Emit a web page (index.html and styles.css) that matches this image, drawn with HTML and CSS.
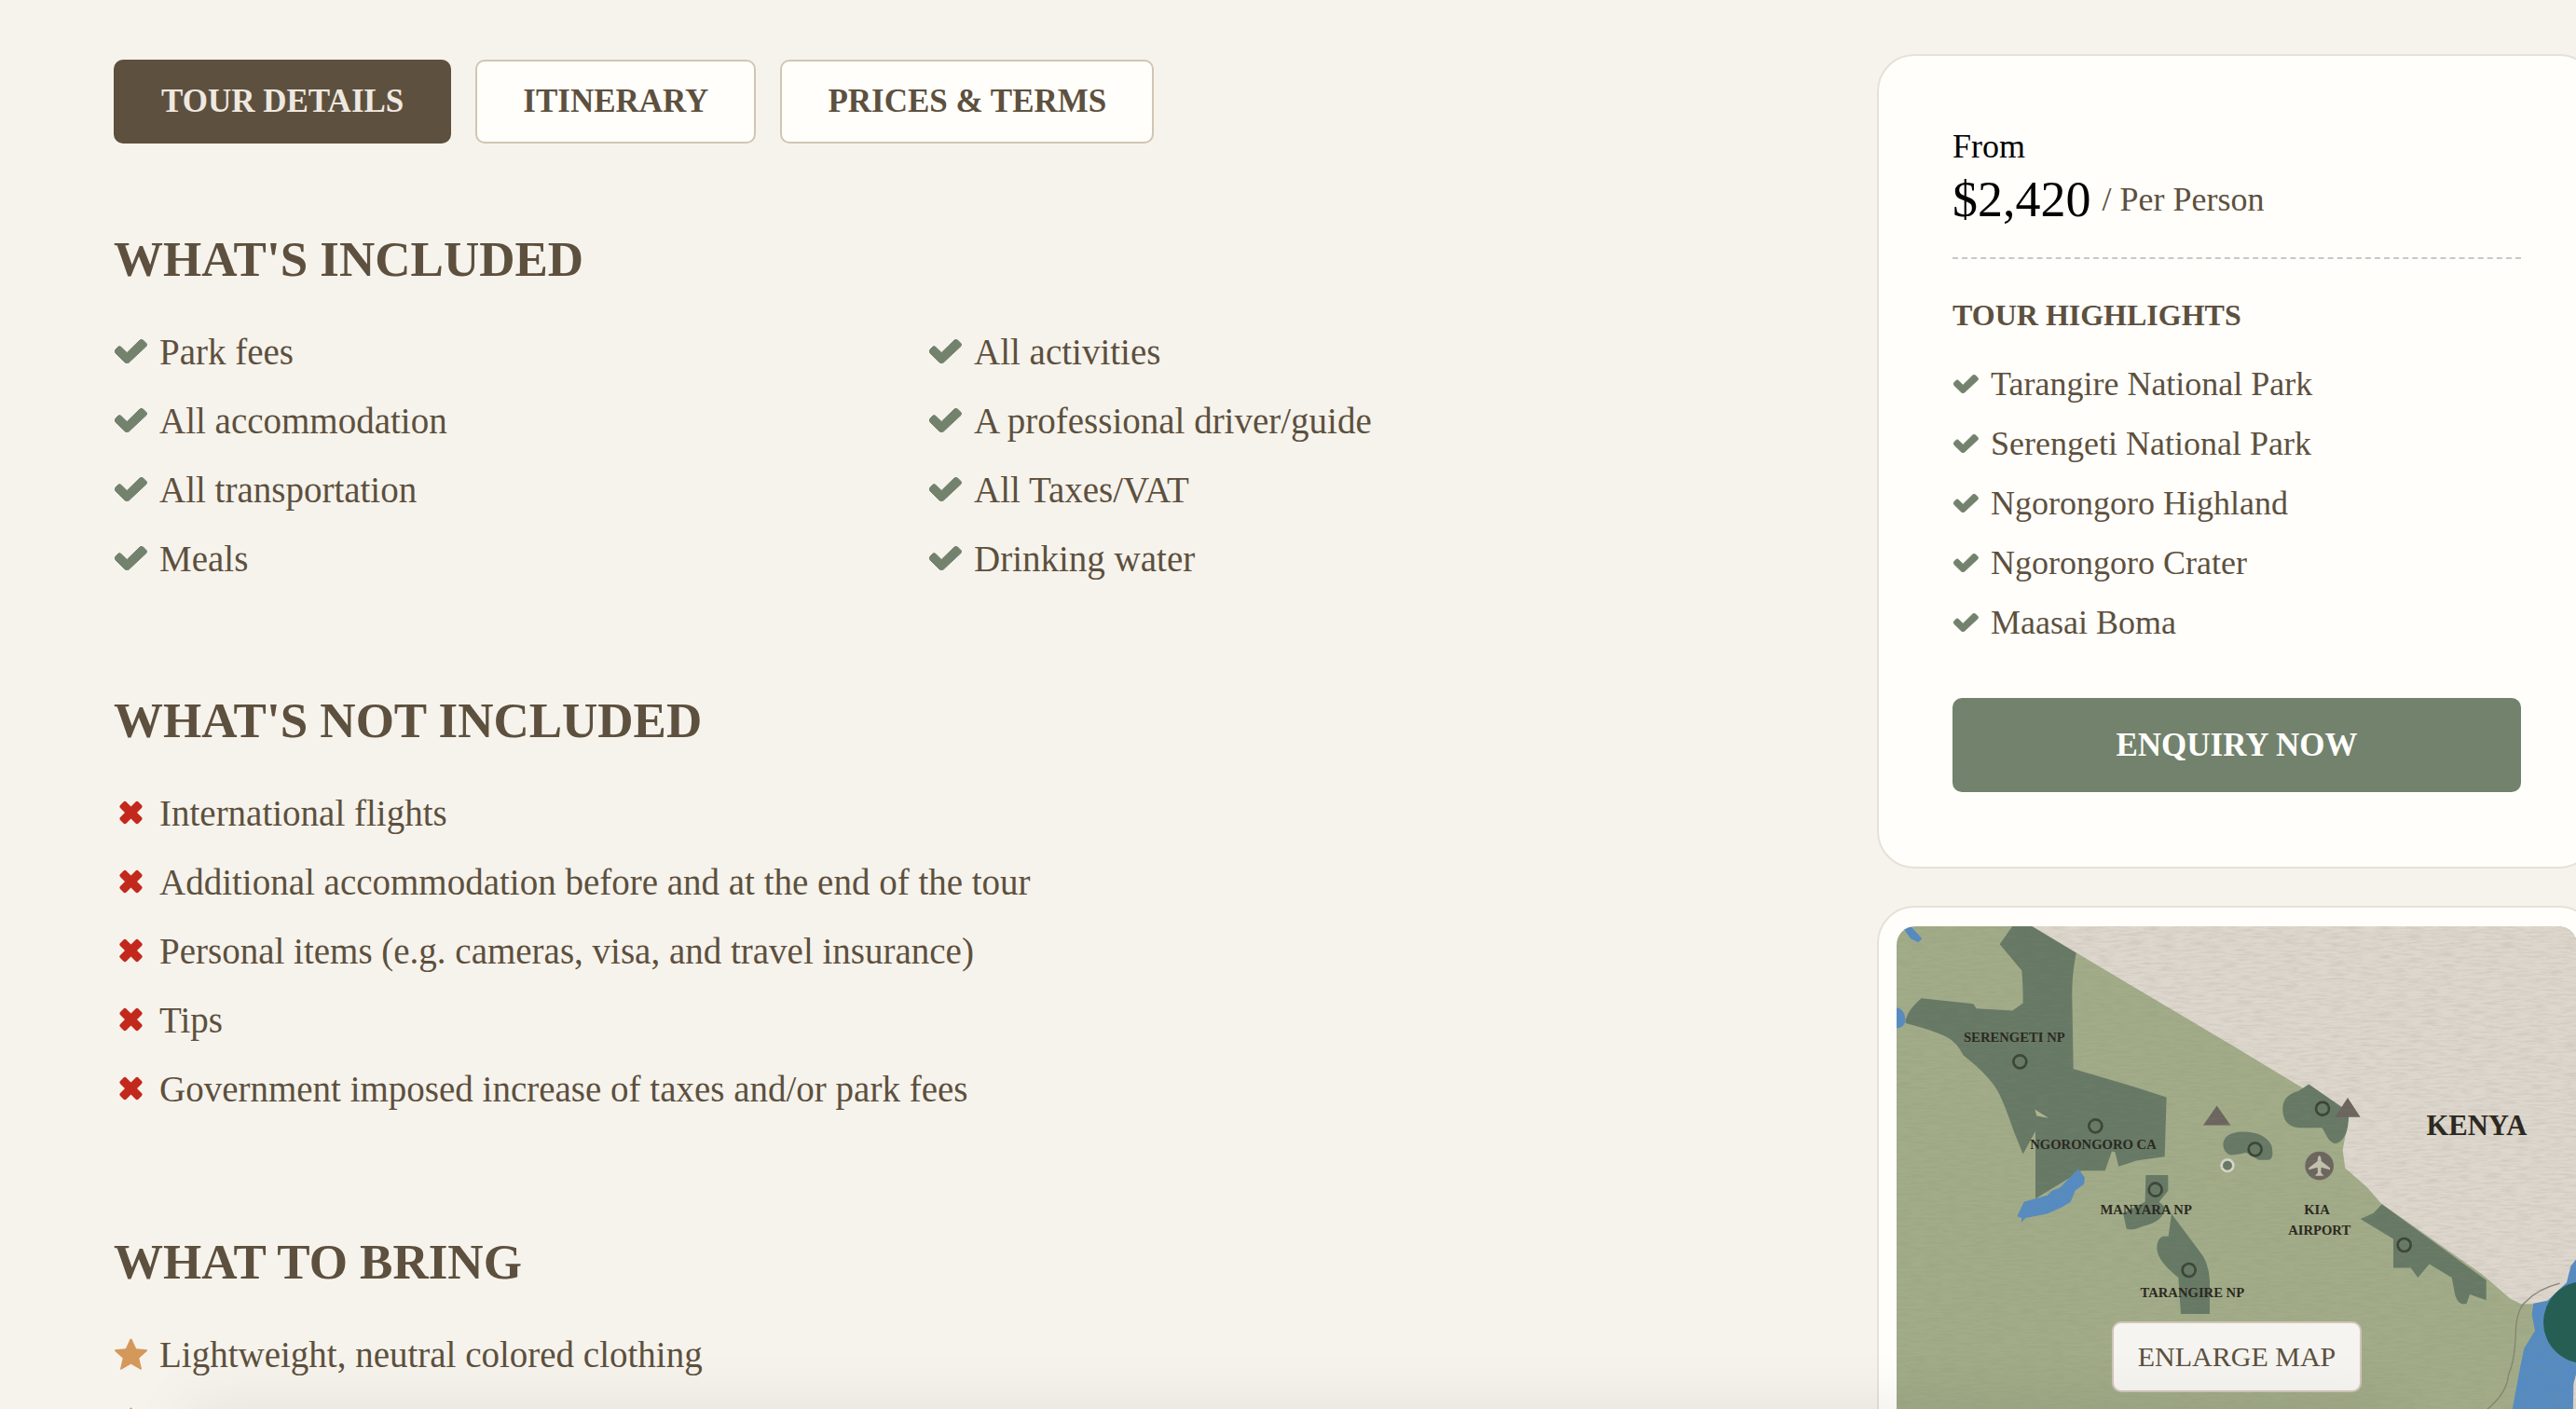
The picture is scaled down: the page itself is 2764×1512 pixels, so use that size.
FILE: index.html
```html
<!DOCTYPE html>
<html lang="en">
<head>
<meta charset="utf-8">
<meta name="viewport" content="width=device-width, initial-scale=1">
<title>Tour Details</title>
<link rel="stylesheet" href="styles.css">
</head>
<body>
<svg class="sprite" aria-hidden="true">
  <symbol id="check" viewBox="0 0 35 26"><path d="M1 11 4 8Q5.500 7 7 8.500L13.200 14.500 27 1Q28.800-.3 30.500 1L34 4.500Q35 6 34 7.500L15.300 25Q13.200 26.600 11.200 25L1 15Q-.4 13 1 11Z" fill="currentColor" stroke="currentColor" stroke-width="1" stroke-linejoin="round"/></symbol>
  <symbol id="cross" viewBox="0 0 26 26"><path d="M5 1.500Q6.500 0 8 1.500L13 6.500 18 1.500Q19.500 0 21 1.500L24.500 5Q26 6.500 24.500 8L19.500 13 24.500 18Q26 19.500 24.500 21L21 24.500Q19.500 26 18 24.500L13 19.500 8 24.500Q6.500 26 5 24.500L1.500 21Q0 19.500 1.500 18L6.500 13 1.500 8Q0 6.500 1.500 5Z" fill="currentColor"/></symbol>
  <symbol id="star" viewBox="0 0 34 32"><path d="M17 .5Q17.700.5 18 1.200L22.300 10.500 33 11.500Q34 12 33.300 13L25.300 20.300 27.800 31Q27.700 32 26.800 31.700L17 26.200 7.200 31.700Q6.300 32 6.200 31L8.700 20.300.7 13Q0 12 1 11.500L11.700 10.500 16 1.200Q16.300.5 17 .5Z" fill="currentColor"/></symbol>
</svg>
<div class="page">
  <main class="content">
    <nav class="tabs" aria-label="Tour sections">
      <button type="button" class="tab tab-active">TOUR DETAILS</button>
      <button type="button" class="tab">ITINERARY</button>
      <button type="button" class="tab">PRICES &amp; TERMS</button>
    </nav>

    <section class="block">
      <h2 class="title">WHAT'S INCLUDED</h2>
      <ul class="list list-split check">
        <li><svg class="icon"><use href="#check"/></svg>Park fees</li>
        <li><svg class="icon"><use href="#check"/></svg>All activities</li>
        <li><svg class="icon"><use href="#check"/></svg>All accommodation</li>
        <li><svg class="icon"><use href="#check"/></svg>A professional driver/guide</li>
        <li><svg class="icon"><use href="#check"/></svg>All transportation</li>
        <li><svg class="icon"><use href="#check"/></svg>All Taxes/VAT</li>
        <li><svg class="icon"><use href="#check"/></svg>Meals</li>
        <li><svg class="icon"><use href="#check"/></svg>Drinking water</li>
      </ul>
    </section>

    <section class="block block-wide">
      <h2 class="title">WHAT'S NOT INCLUDED</h2>
      <ul class="list cross">
        <li><svg class="icon"><use href="#cross"/></svg>International flights</li>
        <li><svg class="icon"><use href="#cross"/></svg>Additional accommodation before and at the end of the tour</li>
        <li><svg class="icon"><use href="#cross"/></svg>Personal items (e.g. cameras, visa, and travel insurance)</li>
        <li><svg class="icon"><use href="#cross"/></svg>Tips</li>
        <li><svg class="icon"><use href="#cross"/></svg>Government imposed increase of taxes and/or park fees</li>
      </ul>
    </section>

    <section class="block">
      <h2 class="title">WHAT TO BRING</h2>
      <ul class="list star">
        <li><svg class="icon"><use href="#star"/></svg>Lightweight, neutral colored clothing</li>
        <li><svg class="icon"><use href="#star"/></svg></li>
      </ul>
    </section>
  </main>

  <aside class="sidebar">
    <div class="card">
      <p class="from">From</p>
      <p class="price"><span class="amount">$2,420</span><span class="unit">/ Per Person</span></p>
      <h3 class="subtitle">TOUR HIGHLIGHTS</h3>
      <ul class="highlights check">
        <li><svg class="icon-small"><use href="#check"/></svg>Tarangire National Park</li>
        <li><svg class="icon-small"><use href="#check"/></svg>Serengeti National Park</li>
        <li><svg class="icon-small"><use href="#check"/></svg>Ngorongoro Highland</li>
        <li><svg class="icon-small"><use href="#check"/></svg>Ngorongoro Crater</li>
        <li><svg class="icon-small"><use href="#check"/></svg>Maasai Boma</li>
      </ul>
      <button type="button" class="enquire">ENQUIRY NOW</button>
    </div>

    <div class="map-card">
      <svg class="map" viewBox="105 69 2190 1650" role="img" aria-label="Map of the tour">
        <defs>
          <filter id="cloth" x="0" y="0" width="100%" height="100%">
            <feTurbulence type="fractalNoise" baseFrequency="0.02 0.14" numOctaves="3" seed="4"/>
            <feColorMatrix values="0 0 0 0 0.250  0 0 0 0 0.250  0 0 0 0 0.200  1.200 0 0 0 -0.450"/>
          </filter>
        </defs>
        <path fill="#a2ac88" d="M105 69H2295V1719H105Z"/>
        <g transform="translate(0 -3) scale(1 1.037)">
          <path fill="#ded7cd" d="M540 69 1200 448 1530 640 1560 660 1541 765 1549 820 1620 880 1665 930 1990 1150 2080 1225 2115 1242 2160 1242 2295 1230V69Z"/>
          <g fill="#667965">
            <path d="M478 69H540L683 152Q668 230 670 290L674 512 850 562 974 600 968 785 880 796 820 815 808 770 798 768 776 828H700L552 915V705L512 777 482 705Q450 615 430 580 400 530 320 470 300 430 265 412 210 388 134 370 134 335 185 293L352 310 362 325 478 331 512 308Q512 250 508 207L437 125Z"/>
            <path d="M907 842H979V890L950 925 968 940Q968 985 900 1000 860 1016 845 1008L834 960 905 925Z"/>
            <path d="M990 962 1080 1078Q1110 1110 1113 1170V1273H1020L1012 1160Q945 1110 943 1070 942 1040 962 1032L980 1032Z"/>
            <path d="M1156 745Q1160 708 1220 707 1290 707 1312 750 1322 795 1300 795H1270L1230 772Q1200 780 1180 780 1155 770 1156 745Z"/>
            <path d="M1348 630Q1352 592 1400 580L1432 560 1560 645Q1562 700 1545 725 1520 760 1495 730L1475 695H1400Q1345 690 1348 630Z"/>
            <path d="M1598 978 1640 960 1667 932 2003 1168V1230L1950 1212 1940 1240Q1915 1250 1903 1215L1892 1160 1820 1118 1783 1160 1760 1130H1704V1040Z"/>
          </g>
          <path fill="#b3b68f" d="M550 638 594 665 556 658Z"/>
          <g fill="#558bc2">
            <path d="M690 822 711 850 708 870 680 890 665 925 640 940 590 962 520 975 506 990 508 975 493 970 515 925 590 905 605 890 632 880Z"/>
            <path d="M122 69H150L187 108 175 119 150 108Z"/>
            <path d="M105 322Q130 325 134 360 130 385 105 386Z"/>
            <path d="M2295 1100 2275 1125 2262 1175 2200 1232 2155 1240 2150 1275 2160 1325 2125 1380 2112 1440 2085 1580 2050 1719H2295Z"/>
          </g>
          <path fill="#ded7cd" d="M2295 1450 2284 1490 2282 1600H2295Z"/>
          <path fill="none" stroke="#858574" stroke-width="4" d="M2240 1178Q2170 1195 2130 1235 2100 1260 2098 1330 2095 1420 2075 1460 2070 1520 2005 1570"/>
          <g fill="#6b655d">
            <path d="M1136 626 1180 687H1092Z"/>
            <path d="M1557 602 1598 662H1516Z"/>
          </g>
        </g>
        <circle cx="1466" cy="840" r="46" fill="#6b655d"/>
        <path fill="#c5c3b0" transform="translate(0 27)" d="M1466 780Q1472 783 1472 798L1500 820V826L1472 818 1471 835 1480 845H1452L1461 835 1460 818 1432 826V820L1460 798Q1460 783 1466 780Z"/>
        <circle cx="1170" cy="839" r="19" fill="#667965" stroke="#ddd9cc" stroke-width="8"/>
        <g fill="none" stroke="#3b4435" stroke-width="8">
          <circle cx="502" cy="505" r="21"/>
          <circle cx="745" cy="712" r="21"/>
          <circle cx="938" cy="917" r="21"/>
          <circle cx="1046" cy="1176" r="21"/>
          <circle cx="1259" cy="787" r="21"/>
          <circle cx="1476" cy="656" r="21"/>
          <circle cx="1739" cy="1095" r="21"/>
        </g>
        <rect x="105" y="69" width="2190" height="1650" filter="url(#cloth)" opacity="0.3"/>
        <g class="map-label">
          <text x="484" y="442">SERENGETI NP</text>
          <text x="738" y="787">NGORONGORO CA</text>
          <text x="908" y="996">MANYARA NP</text>
          <text x="1057" y="1263">TARANGIRE NP</text>
          <text x="1458" y="997">KIA</text>
          <text x="1466" y="1061">AIRPORT</text>
          <text class="map-country" x="1972" y="740">KENYA</text>
        </g>
      </svg>
      <button type="button" class="enlarge">ENLARGE MAP</button>
    </div>
  </aside>
</div>
<div class="bar-shadow"></div>
<button type="button" class="chat" aria-label="Chat"></button>
</body>
</html>
```

FILE: styles.css
```css
* { box-sizing: border-box; }

html, body { overflow-x: clip; }

body {
  margin: 0;
  height: 100vh;
  overflow: hidden;
  background: #f6f3ec;
  color: #5d503e;
  font-family: "Liberation Serif", "Times New Roman", serif;
  font-size: 39px;
}

h2, h3, p, ul { margin: 0; padding: 0; }
ul { list-style: none; }
button { font-family: inherit; color: inherit; cursor: pointer; padding: 0; }

.sprite { position: absolute; width: 0; height: 0; }

.page {
  display: grid;
  grid-template-columns: minmax(0, 1fr) 772px;
  column-gap: 144px;
  align-items: start;
  margin-right: -22px;
  padding: 58px 0 0 122px;
}

.content { padding-top: 6px; }

.tabs { display: flex; gap: 26px; }

.tab {
  height: 90px;
  padding: 0 49px;
  border: 2px solid #d1c5b2;
  border-radius: 10px;
  background: #fffefb;
  font-size: 35px;
  font-weight: bold;
}

.tab-active {
  border-color: #5d503e;
  background: #5d503e;
  color: #efe8e0;
}

.block { padding-top: 105px; }
.block-wide { padding-bottom: 12px; }
.tabs + .block { padding-top: 92px; }

.title {
  font-size: 53px;
  line-height: 64px;
  margin-bottom: 30px;
}

.list li {
  display: flex;
  align-items: center;
  gap: 12px;
  height: 74px;
}

.list-split {
  display: grid;
  grid-template-columns: repeat(2, minmax(0, 1fr));
}

.icon { flex: none; width: 37px; height: 26px; overflow: visible; }
.icon-small { flex: none; width: 29px; height: 20px; overflow: visible; }
.check svg { color: #72826d; }
.cross svg { color: #c3281c; }
.star svg { color: #d4985a; height: 34px; }

.sidebar { display: grid; gap: 40px; }

.card, .map-card {
  border: 2px solid #e7e0d7;
  border-radius: 40px;
  background: #fffefb;
}

.card { padding: 76px 79px 80px; }

.from {
  color: #000;
  font-size: 36px;
  line-height: 42px;
}

.price {
  display: flex;
  align-items: center;
  gap: 12px;
  height: 72px;
  margin-bottom: 26px;
}
.amount { color: #000; font-size: 54px; }
.unit { font-size: 36px; }

.subtitle {
  padding-top: 38px;
  border-top: 2px dashed #c8c8c8;
  font-size: 32px;
  line-height: 44px;
  margin-bottom: 20px;
}

.highlights li {
  display: flex;
  align-items: center;
  gap: 12px;
  height: 64px;
  font-size: 36px;
}

.enquire {
  display: block;
  width: 100%;
  height: 101px;
  margin-top: 49px;
  border: 0;
  border-radius: 10px;
  background: #72826d;
  color: #fffefb;
  font-size: 35px;
  font-weight: bold;
}

.map-card { position: relative; padding: 20px 19px; }

.map { display: block; width: 100%; border-radius: 20px; }

.map-label {
  fill: #2c2921;
  font-size: 44px;
  font-weight: bold;
  text-anchor: middle;
}
.map-country { font-size: 92px; }

.enlarge {
  position: absolute;
  top: 444px;
  left: 50%;
  width: 268px;
  height: 76px;
  margin-left: -134px;
  border: 2px solid #d1c5b8;
  border-radius: 10px;
  background: #f5f4f0;
  font-size: 30px;
}

.chat {
  position: fixed;
  right: -53px;
  bottom: 49px;
  width: 88px;
  height: 88px;
  border: 0;
  border-radius: 50%;
  background: #265e54;
}

.bar-shadow {
  position: fixed;
  left: 200px;
  right: 200px;
  bottom: -100px;
  height: 100px;
  box-shadow: 0 0 70px rgba(0, 0, 0, 0.08);
}
```
